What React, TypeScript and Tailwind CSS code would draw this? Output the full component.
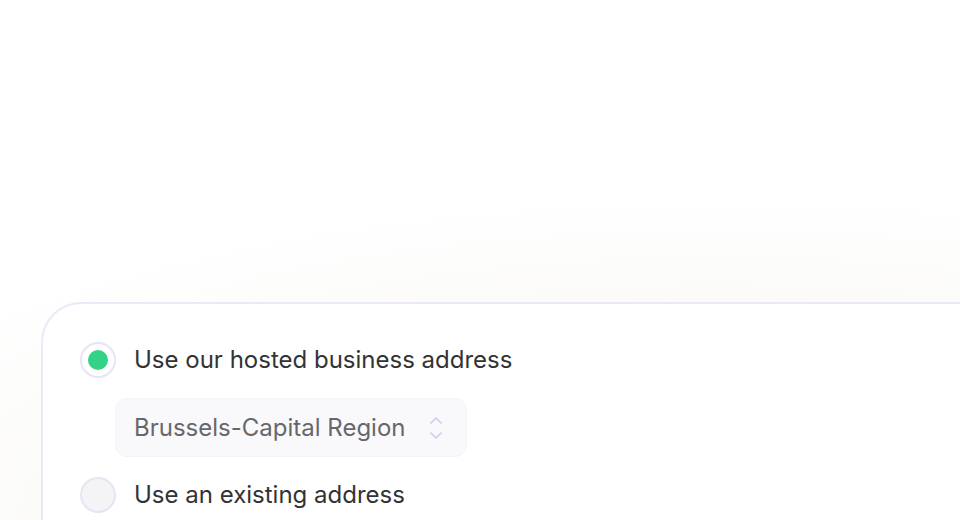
import React from 'react';

const Radio = ({ checked }: { checked?: boolean }) => (
  <span
    className={
      'flex h-9 w-9 shrink-0 items-center justify-center rounded-full border-2 border-[#e6e4f5] ' +
      (checked ? 'bg-white' : 'bg-[#f4f4f6]')
    }
  >
    {checked && <span className="h-5 w-5 rounded-full bg-[#34d286]" />}
  </span>
);

export default function App() {
  return (
    <div
      className="h-[520px] w-[960px] overflow-hidden bg-[radial-gradient(ellipse_120%_75%_at_75%_100%,#f6f4ef_0%,#f9f8f5_45%,#ffffff_82%)] pl-[41px] pt-[302px]"
      style={{ fontFamily: 'Inter, "Noto Sans", sans-serif' }}
    >
      <div className="h-[300px] w-[1000px] rounded-tl-[40px] border-l-2 border-t-2 border-[#ebe9f7] bg-white pl-[37px] pt-[38px]">
        <div className="flex flex-col gap-5">
          <label className="flex items-center gap-[18px]">
            <Radio checked />
            <span className="text-[24px] leading-8 text-[#333335]">Use our hosted business address</span>
          </label>

          <div className="ml-[35px] flex h-[59px] w-[352px] items-center justify-between rounded-xl border border-[#f3f3f8] bg-[#f9f9fc] pl-[18px] pr-[22px]">
            <span className="text-[24px] leading-8 text-[#67676b]">Brussels-Capital Region</span>
            <svg width="16" height="26" viewBox="0 0 16 26" fill="none" stroke="#cdcaeb" strokeWidth="1.6" strokeLinecap="round" strokeLinejoin="round">
              <path d="M3 8 8 3l5 5" />
              <path d="M3 18l5 5 5-5" />
            </svg>
          </div>

          <label className="flex items-center gap-[18px]">
            <Radio />
            <span className="text-[24px] leading-8 text-[#333335]">Use an existing address</span>
          </label>
        </div>
      </div>
    </div>
  );
}
